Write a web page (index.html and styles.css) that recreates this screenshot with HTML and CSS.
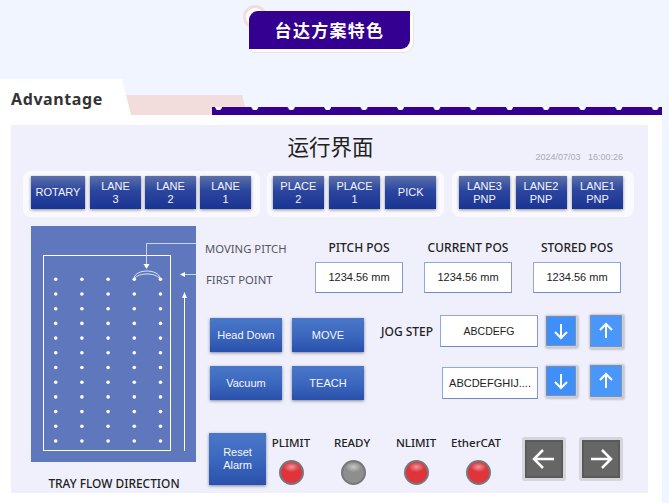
FILE: index.html
```html
<!DOCTYPE html>
<html lang="en">
<head>
    <meta charset="UTF-8">
    <title>台达方案特色</title>
    <link rel="stylesheet" href="styles.css">
</head>
<body>
    <header class="top">
        <div class="top-frame">
            <h1 class="top-tab">台达方案特色</h1>
        </div>
    </header>

    <div class="section-head">
        <h2 class="section-tab">Advantage</h2>
    </div>

    <div class="sheet">
        <main class="panel">
            <div class="panel-head">
                <span></span>
                <h3 class="panel-title">运行界面</h3>
                <span class="panel-date">2024/07/03&nbsp;&nbsp;&nbsp;16:00:26</span>
            </div>

            <div class="toolbar">
                <div class="tool-group group-lane">
                    <button class="hmi-btn btn-rotary">ROTARY</button>
                    <button class="hmi-btn">LANE<br>3</button>
                    <button class="hmi-btn">LANE<br>2</button>
                    <button class="hmi-btn">LANE<br>1</button>
                </div>
                <div class="tool-group group-place">
                    <button class="hmi-btn">PLACE<br>2</button>
                    <button class="hmi-btn">PLACE<br>1</button>
                    <button class="hmi-btn">PICK</button>
                </div>
                <div class="tool-group group-pnp">
                    <button class="hmi-btn">LANE3<br>PNP</button>
                    <button class="hmi-btn">LANE2<br>PNP</button>
                    <button class="hmi-btn">LANE1<br>PNP</button>
                </div>
            </div>

            <div class="work">
                <div class="tray-col">
                    <svg class="tray" id="tray" width="165" height="236" viewBox="0 0 165 236">
                        <rect x="12.5" y="29.5" width="127" height="195" fill="none" stroke="#fff" stroke-width="1"/>
                        <path d="M165 17.5H115.5V40" fill="none" stroke="#e8ecf8" stroke-width="0.8"/>
                        <path d="M112.5 38h6l-3 5z" fill="#fff"/>
                        <path d="M165 48.500H152" fill="none" stroke="#e8ecf8" stroke-width="0.8"/>
                        <path d="M149 48.500l5-2.500v5z" fill="#fff"/>
                        <path d="M153.500 225V72" fill="none" stroke="#fff" stroke-width="1"/>
                        <path d="M153.500 66l2.500 6h-5z" fill="#fff"/>
                        <path d="M103 53c0-6 8-8 13-8s13 2 13 8c-3-4-8-5-13-5s-10 1-13 5z" fill="none" stroke="#fff" stroke-width="0.8"/>
                    </svg>
                    <div class="tray-caption">TRAY FLOW DIRECTION</div>
                </div>

                <div class="controls">
                    <div class="pos-row">
                        <div class="pos-notes">
                            <span>MOVING PITCH</span>
                            <span class="note-first">FIRST POINT</span>
                        </div>
                        <div class="pos-col">
                            <div class="pos-label">PITCH POS</div>
                            <div class="value-box">1234.56 mm</div>
                        </div>
                        <div class="pos-col">
                            <div class="pos-label">CURRENT POS</div>
                            <div class="value-box">1234.56 mm</div>
                        </div>
                        <div class="pos-col">
                            <div class="pos-label">STORED POS</div>
                            <div class="value-box">1234.56 mm</div>
                        </div>
                    </div>

                    <div class="jog-row">
                        <div class="action-grid">
                            <button class="hmi-btn btn-light">Head Down</button>
                            <button class="hmi-btn btn-light">MOVE</button>
                            <button class="hmi-btn btn-light">Vacuum</button>
                            <button class="hmi-btn btn-light">TEACH</button>
                        </div>
                        <div class="jog-grid">
                            <div class="jog-line">
                                <span class="jog-label">JOG STEP</span>
                                <div class="value-box jog-box">ABCDEFG</div>
                                <button class="arrow-btn">
                                    <svg width="20" height="20" viewBox="0 0 20 20"><path d="M10 3v14M4 11l6 6 6-6" fill="none" stroke="#fff" stroke-width="2"/></svg>
                                </button>
                                <button class="arrow-btn btn-up">
                                    <svg width="20" height="20" viewBox="0 0 20 20"><path d="M10 17V3M4 9l6-6 6 6" fill="none" stroke="#fff" stroke-width="2"/></svg>
                                </button>
                            </div>
                            <div class="jog-line line-second">
                                <div class="value-box jog-box box-long">ABCDEFGHIJ....</div>
                                <button class="arrow-btn">
                                    <svg width="20" height="20" viewBox="0 0 20 20"><path d="M10 3v14M4 11l6 6 6-6" fill="none" stroke="#fff" stroke-width="2"/></svg>
                                </button>
                                <button class="arrow-btn btn-up">
                                    <svg width="20" height="20" viewBox="0 0 20 20"><path d="M10 17V3M4 9l6-6 6 6" fill="none" stroke="#fff" stroke-width="2"/></svg>
                                </button>
                            </div>
                        </div>
                    </div>

                    <div class="status-row">
                        <button class="hmi-btn btn-light btn-reset">Reset<br>Alarm</button>
                        <div class="status-item"><span>PLIMIT</span><i class="led"></i></div>
                        <div class="status-item item-ready"><span>READY</span><i class="led led-off"></i></div>
                        <div class="status-item"><span>NLIMIT</span><i class="led"></i></div>
                        <div class="status-item item-cat"><span>EtherCAT</span><i class="led"></i></div>
                        <button class="side-btn btn-left">
                            <svg width="26" height="26" viewBox="0 0 26 26"><path d="M23 13H3M12 4l-9 9 9 9" fill="none" stroke="#fff" stroke-width="2.500"/></svg>
                        </button>
                        <button class="side-btn">
                            <svg width="26" height="26" viewBox="0 0 26 26"><path d="M3 13h20M14 4l9 9-9 9" fill="none" stroke="#fff" stroke-width="2.500"/></svg>
                        </button>
                    </div>
                </div>
            </div>
        </main>
    </div>

    <script>
        // dot grid of the tray
        var tray = document.getElementById("tray");
        for (var r = 0; r < 12; r++) {
            for (var c = 0; c < 5; c++) {
                var dot = document.createElementNS("http://www.w3.org/2000/svg", "circle");
                dot.setAttribute("cx", 24.7 + c * 26.2);
                dot.setAttribute("cy", 53.3 + r * 14.7);
                dot.setAttribute("r", 1.8);
                dot.setAttribute("fill", "#fff");
                tray.appendChild(dot);
            }
        }
    </script>
</body>
</html>
```

FILE: styles.css
```css
body {
    margin: 0;
    height: 503px;
    overflow: hidden;
    background-color: #f1f5ff;
    font-family: "Liberation Sans", Arial, sans-serif;
}

button {
    font-family: inherit;
    border: 0;
    padding: 0;
}

.top {
    height: 79px;
    padding: 11px 0 0 249px;
    box-sizing: border-box;
}

.top-frame {
    position: relative;
    width: 161px;
    isolation: isolate;
}

.top-frame::before {
    content: "";
    position: absolute;
    left: -6px;
    top: -6px;
    width: 18px;
    height: 18px;
    background-color: #fff;
    border: 3px solid #f2dcdc;
    border-radius: 50%;
    z-index: -1;
}

.top-frame::after {
    content: "";
    position: absolute;
    left: 4px;
    top: 4px;
    width: 160px;
    height: 37px;
    border-right: 1px solid #f2dcdc;
    border-bottom: 1px solid #f2dcdc;
    border-radius: 0 0 10px 0;
    background-color: #fff;
    z-index: -1;
}

.top-tab {
    height: 38px;
    margin: 0;
    line-height: 37px;
    text-align: center;
    font-family: "Noto Sans CJK SC", sans-serif;
    font-size: 17px;
    font-weight: 700;
    letter-spacing: 1.300px;
    color: #fff;
    background-color: #330091;
    border-radius: 9px 0 9px 0;
}

.section-head {
    position: relative;
    height: 36px;
    margin-right: 7px;
}

.section-head::before {
    content: "";
    position: absolute;
    left: 120px;
    top: 16px;
    width: 127px;
    height: 20px;
    background-color: #f2dcdc;
    clip-path: polygon(4px 0, 122px 0, 127px 100%, 10px 100%);
}

.section-head::after {
    content: "";
    position: absolute;
    left: 212px;
    right: 0;
    top: 28px;
    height: 8px;
    background-color: #330091;
    background-image: radial-gradient(circle at 6.500px 0, #fff 3px, transparent 3.500px);
    background-size: 36.400px 8px;
}

.section-tab {
    width: 131px;
    height: 36px;
    margin: 0;
    padding-left: 11px;
    box-sizing: border-box;
    line-height: 40px;
    font-family: "Noto Sans", sans-serif;
    font-size: 16px;
    font-weight: 700;
    letter-spacing: 0.6px;
    color: #333;
    background-color: #fff;
    clip-path: polygon(0 0, 122px 0, 131px 100%, 0 100%);
}

.sheet {
    height: 388px;
    margin-right: 7px;
    padding: 10px 14px 0 11px;
    box-sizing: border-box;
    background-color: #fff;
}

.panel {
    height: 368px;
    background-color: #f0f0fd;
}

.panel-head {
    display: grid;
    grid-template-columns: 1fr auto 1fr;
    height: 46px;
    padding-left: 2px;
}

.panel-title {
    margin: 0;
    padding-top: 5px;
    font-family: "Noto Sans CJK SC", sans-serif;
    font-size: 21.500px;
    font-weight: 400;
    line-height: 31px;
    color: #222;
}

.panel-date {
    justify-self: end;
    padding: 26px 25px 0 0;
    font-size: 9px;
    line-height: 12px;
    color: #a9a9b4;
}

.toolbar {
    display: flex;
    gap: 7px;
    margin-left: 12px;
}

.tool-group {
    display: flex;
    gap: 4px;
    height: 46px;
    padding: 5px 8px 8px;
    box-sizing: border-box;
    background-color: rgba(255, 255, 255, 0.65);
    border-radius: 8px;
}

.group-lane {
    width: 237px;
}

.group-place {
    width: 177px;
    padding-left: 6px;
    gap: 5.500px;
}

.group-pnp {
    width: 182px;
    margin-left: 1px;
    padding-left: 7px;
    gap: 5.500px;
}

.hmi-btn {
    width: 51px;
    height: 33px;
    font-size: 11px;
    line-height: 13px;
    color: #f4f6ff;
    background: linear-gradient(#5c70aa, #2b459f 45%, #1a3492);
    box-shadow: 0 1px 3px rgba(40, 40, 60, 0.55);
}

.btn-rotary {
    width: 54px;
    margin-right: 1px;
}

.btn-light {
    width: 72px;
    height: 33px;
    background: linear-gradient(#4a78c9, #3a66bd 55%, #2a51ab);
}

.work {
    display: flex;
    margin: 9px 0 0 20px;
}

.tray-col {
    flex: none;
    width: 165px;
}

.tray {
    display: block;
    background-color: #5f78bd;
}

.tray-caption {
    margin: 13px -9px 0 -8px;
    text-align: center;
    font-family: "Noto Sans", sans-serif;
    font-size: 11.900px;
    font-weight: 500;
    line-height: 16px;
    white-space: nowrap;
    color: #222;
}

.controls {
    flex: none;
    width: 440px;
    margin-left: 9px;
}

.pos-row {
    display: flex;
    height: 67px;
    padding-top: 14px;
    box-sizing: border-box;
}

.pos-notes {
    display: flex;
    flex-direction: column;
    flex: none;
    width: 110px;
    padding-top: 1px;
    box-sizing: border-box;
    font-family: "Noto Sans", sans-serif;
    font-size: 11.300px;
    line-height: 16px;
    white-space: nowrap;
    color: #55555f;
}

.note-first {
    margin: 15px 0 0 1px;
}

.pos-col {
    flex: none;
    width: 88px;
    margin-right: 21px;
}

.pos-label {
    height: 22px;
    text-align: center;
    font-family: "Noto Sans", sans-serif;
    font-size: 12px;
    font-weight: 500;
    line-height: 16px;
    white-space: nowrap;
    color: #222;
}

.value-box {
    height: 31px;
    line-height: 29px;
    box-sizing: border-box;
    text-align: center;
    font-size: 11px;
    color: #222;
    background-color: #fff;
    border: 1px solid #8fa8e4;
    border-right-color: #7f98d8;
    border-bottom-color: #6f88c8;
}

.jog-row {
    display: flex;
    height: 140px;
    padding: 22px 0 0 5px;
    box-sizing: border-box;
}

.action-grid {
    display: grid;
    grid-template-columns: 72px 72px;
    grid-auto-rows: 34px;
    gap: 14px 10px;
    margin-top: 3px;
}

.action-grid .btn-light {
    height: 34px;
}

.jog-grid {
    display: flex;
    flex-direction: column;
    gap: 18px;
    margin-left: 17px;
}

.jog-line {
    display: flex;
    align-items: center;
    height: 32px;
}

.line-second {
    justify-content: flex-end;
}

.jog-label {
    width: 59px;
    font-family: "Noto Sans", sans-serif;
    font-size: 12px;
    font-weight: 500;
    white-space: nowrap;
    color: #222;
}

.jog-box {
    width: 98px;
    height: 32px;
    line-height: 30px;
    margin-right: 7px;
    font-size: 10.500px;
}

.box-long {
    width: 96px;
    margin-top: 4px;
    font-size: 11px;
}

.arrow-btn {
    display: flex;
    align-items: center;
    justify-content: center;
    flex: none;
    width: 32px;
    height: 32px;
    margin-right: 12px;
    background-color: #3f8ffb;
    border: 1px solid #d0d2da;
    border-radius: 2px;
    box-sizing: border-box;
    box-shadow: inset 0 0 0 1px #7d8fb0, 1px 1px 2px 1px #c4c6d0;
}

.btn-up {
    width: 34px;
    height: 34px;
    margin-right: 0;
    background-color: #4a97fc;
}

.status-row {
    display: flex;
    gap: 12.500px;
    height: 52px;
    padding-left: 4px;
}

.btn-reset {
    width: 57px;
    height: 52px;
    flex: none;
    margin-right: -12.500px;
}

.status-item {
    display: flex;
    flex-direction: column;
    align-items: center;
    flex: none;
    gap: 10px;
    width: 50px;
    padding-top: 3px;
    box-sizing: border-box;
    font-family: "Noto Sans", sans-serif;
    font-size: 11.500px;
    font-weight: 500;
    line-height: 14px;
    white-space: nowrap;
    color: #222;
}

.item-ready span {
    margin-right: 3px;
}

.item-cat span {
    margin-right: 5px;
}

.led {
    width: 25px;
    height: 25px;
    box-sizing: border-box;
    border: 2px solid #77777c;
    border-radius: 50%;
    background: radial-gradient(ellipse 8px 5px at 50% 24%, #e89a9e, transparent), #e0333a;
}

.led-off {
    background: radial-gradient(ellipse 8px 5px at 50% 24%, #c8c8c8, transparent), #8e8e8e;
}

.side-btn {
    display: flex;
    align-items: center;
    justify-content: center;
    flex: none;
    width: 44px;
    height: 44px;
    margin-top: 4px;
    background-color: #666;
    border: 3px solid #d5d5da;
    border-radius: 3px;
    box-sizing: border-box;
    box-shadow: inset 0 0 0 2px #5a5a5a;
}

.btn-left {
    margin-left: 6px;
}
```
